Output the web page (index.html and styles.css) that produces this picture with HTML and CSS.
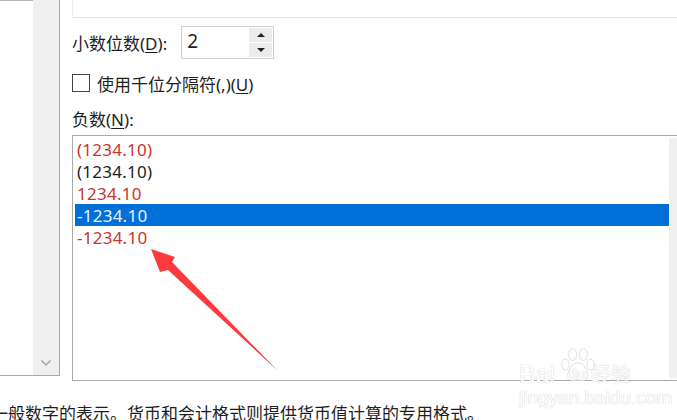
FILE: index.html
```html
<!DOCTYPE html>
<html lang="zh">
<head>
    <meta charset="UTF-8">
    <meta name="viewport" content="width=device-width, initial-scale=1.0">
    <title>设置单元格格式</title>
    <link rel="stylesheet" href="styles.css">
</head>
<body>
    <div class="dialog">
        <div class="category">
            <div class="category-list">
                <div class="category-sel"></div>
            </div>
            <div class="category-scroll">
                <svg class="chevron" width="12" height="8" viewBox="0 0 12 8"><path d="M1.5 1.5 L6 6 L10.5 1.5" fill="none" stroke="#a6a6a6" stroke-width="1.5"/></svg>
            </div>
        </div>
        <div class="options">
            <div class="sample"></div>
            <div class="decimals">
                <span class="label">小数位数(<u>D</u>):</span>
                <div class="spinner">
                    <span class="spinner-value">2</span>
                    <div class="spinner-btns">
                        <div class="spin-btn"><span class="tri-up"></span></div>
                        <div class="spin-btn"><span class="tri-down"></span></div>
                    </div>
                </div>
            </div>
            <div class="thousands">
                <span class="checkbox"></span>
                <span class="label">使用千位分隔符(,)(<u>U</u>)</span>
            </div>
            <div class="label neg-label">负数(<u>N</u>):</div>
            <div class="neg-list">
                <div class="neg-rows">
                    <div class="neg-row red">(1234.10)</div>
                    <div class="neg-row">(1234.10)</div>
                    <div class="neg-row red">1234.10</div>
                    <div class="neg-row selected">-1234.10</div>
                    <div class="neg-row red">-1234.10</div>
                </div>
                <div class="neg-scroll"></div>
            </div>
        </div>
    </div>
    <p class="note">一般数字的表示。货币和会计格式则提供货币值计算的专用格式。</p>

    <!-- 红色箭头 -->
    <svg class="arrow" width="677" height="420" viewBox="0 0 677 420">
        <polygon points="151,249 175,257 172,262 278,371 168,270 160,272" fill="#ff3a3c"/>
    </svg>

    <!-- 水印 -->
    <div class="watermark">
        <svg class="paw" width="36" height="37" viewBox="0 0 40 40">
            <g fill="#fff" stroke="#e4e4e4" stroke-width="1.2">
                <ellipse cx="6" cy="20" rx="4" ry="6"/>
                <ellipse cx="14" cy="9" rx="4.5" ry="6.5"/>
                <ellipse cx="26" cy="9" rx="4.5" ry="6.5"/>
                <ellipse cx="34" cy="20" rx="4" ry="6"/>
                <path d="M20 18 C13 18 9 27 9 32 C9 38 15 38 20 37 C25 38 31 38 31 32 C31 27 27 18 20 18 Z"/>
            </g>
        </svg>
        <div class="wm-title"><span>Bai</span><span class="wm-du">du</span><span class="wm-cn">经验</span></div>
        <div class="wm-url">jingyan.baidu.com</div>
    </div>
</body>
</html>
```

FILE: styles.css
```css
body {
    margin: 0;
    width: 677px;
    height: 420px;
    overflow: hidden;
    position: relative;
    background-color: #fff;
    color: #1e1e1e;
    font-family: "Noto Sans", "Noto Sans CJK SC", sans-serif;
    font-size: 17px;
}
.dialog {
    display: flex;
    height: 381px;
}
.category {
    width: 60px;
    height: 376px;
    flex: none;
    display: flex;
    box-sizing: border-box;
    border-right: 1px solid #a9a9a9;
    border-bottom: 1px solid #a9a9a9;
}
.category-list {
    width: 33px;
}
.category-sel {
    height: 1px;
    background-color: #b5b5b5;
}
.category-scroll {
    flex: 1;
    background-color: #f0f0f0;
    display: flex;
    flex-direction: column;
    justify-content: flex-end;
    align-items: center;
    padding-bottom: 8px;
}
.options {
    flex: 1;
    min-width: 0;
    padding-left: 12px;
}
.sample {
    height: 18px;
    box-sizing: border-box;
    border-left: 1px solid #ececec;
    border-bottom: 1px solid #e4e4e4;
}
.label {
    white-space: nowrap;
}
.label u {
    text-underline-offset: 2px;
}
.decimals {
    display: flex;
    align-items: center;
    gap: 14px;
    margin-top: 8px;
    height: 33px;
}
.spinner {
    width: 93px;
    height: 33px;
    box-sizing: border-box;
    border: 1px solid #cfcfcf;
    display: flex;
    justify-content: space-between;
    padding: 1px;
}
.spinner-value {
    padding-left: 4px;
    font-size: 19px;
    line-height: 27px;
}
.spinner-btns {
    width: 23px;
    display: flex;
    flex-direction: column;
    gap: 1px;
}
.spin-btn {
    flex: 1;
    background-color: #ececec;
    display: flex;
    align-items: center;
    justify-content: center;
}
.tri-up, .tri-down {
    width: 0;
    height: 0;
    border-left: 4px solid transparent;
    border-right: 4px solid transparent;
}
.tri-up {
    border-bottom: 4px solid #222;
}
.tri-down {
    border-top: 4px solid #222;
}
.thousands {
    display: flex;
    align-items: center;
    gap: 7px;
    margin-top: 15px;
    height: 18px;
}
.checkbox {
    width: 18px;
    height: 18px;
    box-sizing: border-box;
    border: 1px solid #444;
}
.neg-label {
    margin-top: 16px;
    line-height: 24px;
}
.neg-list {
    margin-top: 3px;
    height: 246px;
    box-sizing: border-box;
    border: 1px solid #a9a9a9;
    border-right: none;
    display: flex;
    padding: 2px 0 2px 2px;
}
.neg-rows {
    flex: 1;
}
.neg-row {
    height: 22px;
    line-height: 24px;
    padding-left: 2px;
    white-space: nowrap;
    letter-spacing: 0.25px;
}
.red {
    color: #c9362a;
}
.selected {
    background-color: #0070d8;
    color: #e6f2fb;
}
.neg-scroll {
    width: 8px;
    background-color: #f0f0f0;
}
.note {
    margin: 21px 0 0 -9px;
    line-height: 24px;
    white-space: nowrap;
}
.arrow {
    position: absolute;
    left: 0;
    top: 0;
}
.watermark {
    position: absolute;
    left: 519px;
    top: 345px;
    width: 120px;
    color: #fff;
    text-shadow: 0 0 1px #cfcfcf, 0 0 1px #cfcfcf;
}
.paw {
    position: absolute;
    left: 41px;
    top: 1px;
}
.wm-title {
    position: relative;
    display: flex;
    align-items: flex-end;
    margin-top: 16px;
    font-family: "Liberation Sans", sans-serif;
    font-size: 25px;
    line-height: 26px;
}
.wm-du {
    margin-left: 12px;
    font-size: 17px;
    line-height: 24px;
}
.wm-cn {
    margin-left: 5px;
    font-family: "Noto Sans CJK SC", sans-serif;
    font-size: 20px;
    line-height: 26px;
}
.wm-url {
    font-family: "Liberation Sans", sans-serif;
    font-size: 19px;
    line-height: 20px;
    margin-top: 1px;
    white-space: nowrap;
}
```
